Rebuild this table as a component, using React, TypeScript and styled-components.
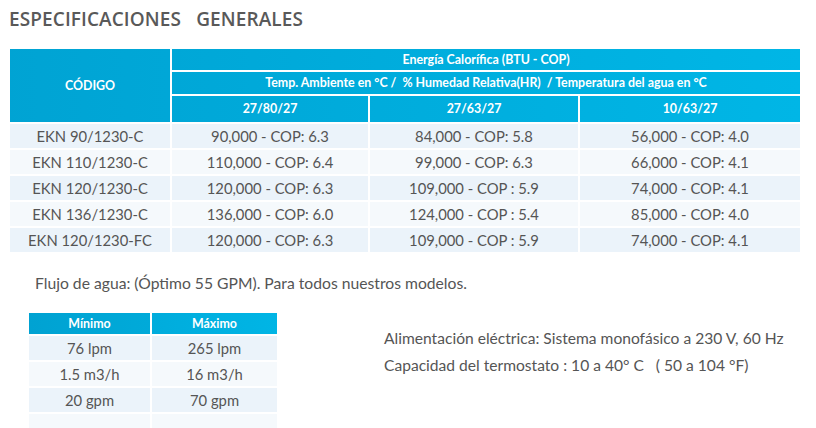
import React from "react";
import styled, { createGlobalStyle } from "styled-components";

const Global = createGlobalStyle`
  html, body { margin: 0; padding: 0; background: #fff; }
  body { font-family: Lato, "Liberation Sans", sans-serif; color: #555; }
`;

const Page = styled.div`
  padding: 0 8px;
  width: 816px;
  box-sizing: border-box;
`;

const Heading = styled.h1`
  margin: 0;
  font-family: "Open Sans", "Liberation Sans", sans-serif;
  font-weight: 600;
  font-size: 19px;
  line-height: 38px;
  color: #595959;
  padding-left: 1px;
  letter-spacing: 0.1px;
  white-space: pre;
`;

const SpecTable = styled.table<{ $w: number; $ml?: number }>`
  border-collapse: separate;
  border-spacing: 2px;
  table-layout: fixed;
  width: ${(p) => p.$w}px;
  margin-left: ${(p) => p.$ml ?? 0}px;
`;

const MainTable = styled(SpecTable)`
  margin-top: 9px;
`;

const HeadCell = styled.th<{ $h: number }>`
  height: ${(p) => p.$h}px;
  padding: 0;
  font-family: Lato, sans-serif;
  font-weight: 700;
  font-size: 12.4px;
  line-height: 14px;
  color: #fff;
  text-align: center;
  background: linear-gradient(to right, #00a3d3 0px, #00b6e6 800px) fixed;
  white-space: pre;
`;

const SmallHead = styled.th<{ $from: string; $to: string }>`
  height: 21px;
  padding: 0;
  font-family: Lato, sans-serif;
  font-weight: 700;
  font-size: 12.4px;
  line-height: 14px;
  color: #fff;
  text-align: center;
  background: linear-gradient(to right, ${(p) => p.$from}, ${(p) => p.$to});
`;

const Row = styled.tr<{ $alt: boolean }>`
  background: ${(p) => (p.$alt ? "#f5f9fc" : "#ebf3fa")};
`;

const Cell = styled.td`
  height: 24px;
  padding: 0;
  font-size: 14.8px;
  line-height: 18px;
  color: #555;
  text-align: center;
  white-space: pre;
`;

const Note = styled.p`
  margin: 19px 0 0 27px;
  font-size: 15.7px;
  line-height: 20px;
`;

const Bottom = styled.div`
  display: flex;
  align-items: flex-start;
  margin-top: 18px;
`;

const SideText = styled.div`
  margin: 14px 0 0 105px;
  font-size: 15.6px;
  line-height: 27px;
  white-space: pre;
`;

const rows = [
  ["EKN 90/1230-C", "90,000 - COP: 6.3", "84,000 - COP: 5.8", "56,000 - COP: 4.0"],
  ["EKN 110/1230-C", "110,000 - COP: 6.4", "99,000 - COP: 6.3", "66,000 - COP: 4.1"],
  ["EKN 120/1230-C", "120,000 - COP: 6.3", "109,000 - COP : 5.9", "74,000 - COP: 4.1"],
  ["EKN 136/1230-C", "136,000 - COP: 6.0", "124,000 - COP : 5.4", "85,000 - COP: 4.0"],
  ["EKN 120/1230-FC", "120,000 - COP: 6.3", "109,000 - COP : 5.9", "74,000 - COP: 4.1"],
];

const flow = [
  ["76 lpm", "265 lpm"],
  ["1.5 m3/h", "16 m3/h"],
  ["20 gpm", "70 gpm"],
  ["", ""],
];

export default function App() {
  return (
    <Page>
      <Global />
      <Heading>{"ESPECIFICACIONES   GENERALES"}</Heading>
      <MainTable $w={794}>
        <colgroup>
          <col style={{ width: 160 }} />
          <col style={{ width: 196 }} />
          <col style={{ width: 208 }} />
          <col style={{ width: 220 }} />
        </colgroup>
        <thead>
          <tr>
            <HeadCell $h={21} rowSpan={3}>CÓDIGO</HeadCell>
            <HeadCell $h={21} colSpan={3}>Energía Calorífica (BTU - COP)</HeadCell>
          </tr>
          <tr>
            <HeadCell $h={22} colSpan={3}>
              {"Temp. Ambiente en °C /  % Humedad Relativa(HR)  / Temperatura del agua en °C"}
            </HeadCell>
          </tr>
          <tr>
            <HeadCell $h={26}>27/80/27</HeadCell>
            <HeadCell $h={26}>27/63/27</HeadCell>
            <HeadCell $h={26}>10/63/27</HeadCell>
          </tr>
        </thead>
        <tbody>
          {rows.map((r, i) => (
            <Row key={i} $alt={i % 2 === 1}>
              {r.map((c, j) => (
                <Cell key={j}>{c}</Cell>
              ))}
            </Row>
          ))}
        </tbody>
      </MainTable>
      <Note>Flujo de agua: (Óptimo 55 GPM). Para todos nuestros modelos.</Note>
      <Bottom>
        <SpecTable $w={252} $ml={19}>
          <colgroup>
            <col style={{ width: 121 }} />
            <col style={{ width: 125 }} />
          </colgroup>
          <thead>
            <tr>
              <SmallHead $from="#00a2d2" $to="#00aad9">Mínimo</SmallHead>
              <SmallHead $from="#00acdc" $to="#00b5e5">Máximo</SmallHead>
            </tr>
          </thead>
          <tbody>
            {flow.map((r, i) => (
              <Row key={i} $alt={i % 2 === 1}>
                {r.map((c, j) => (
                  <Cell key={j}>{c}</Cell>
                ))}
              </Row>
            ))}
          </tbody>
        </SpecTable>
        <SideText>
          {"Alimentación eléctrica: Sistema monofásico a 230 V, 60 Hz\nCapacidad del termostato : 10 a 40° C   ( 50 a 104 °F)"}
        </SideText>
      </Bottom>
    </Page>
  );
}
